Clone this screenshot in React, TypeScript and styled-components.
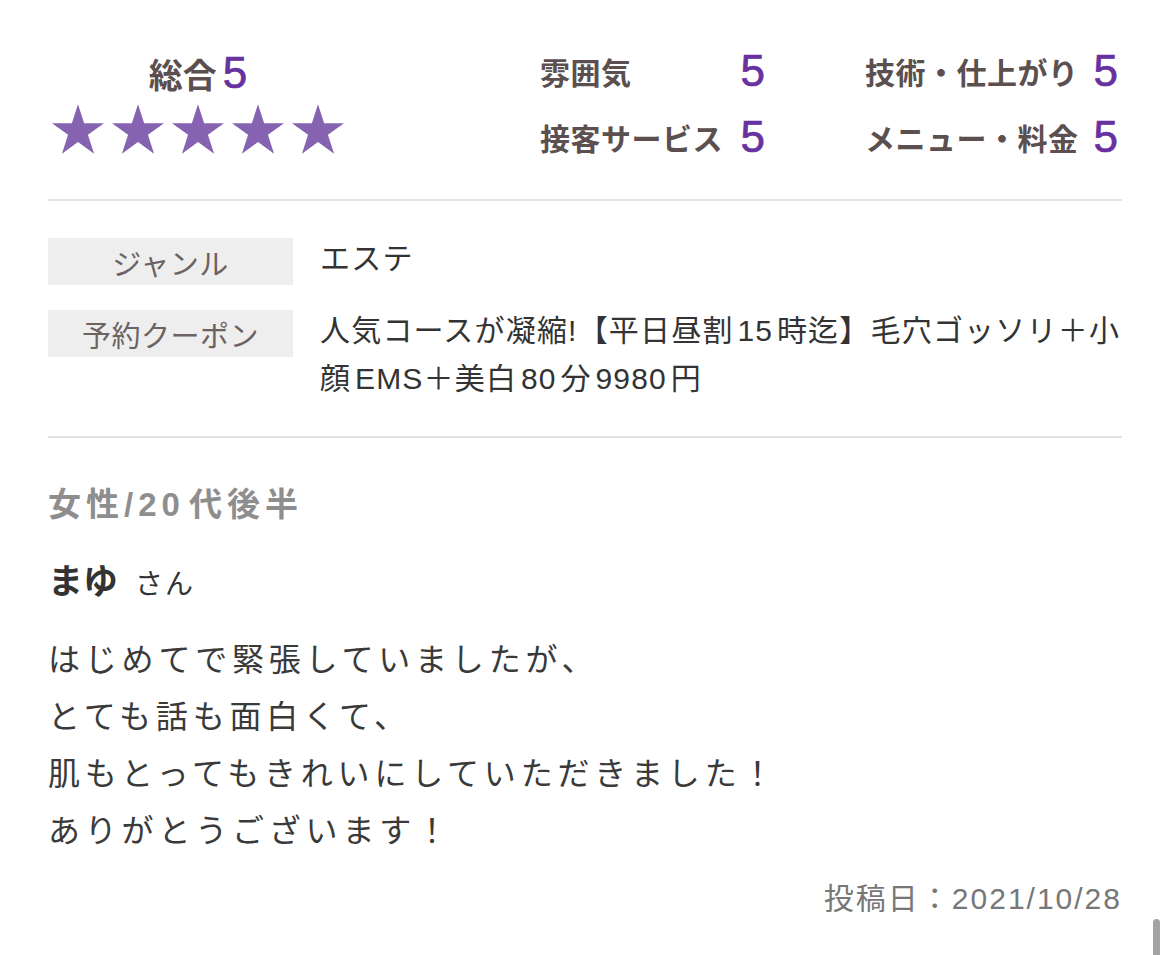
import styled, { createGlobalStyle } from "styled-components";

const GlobalStyle = createGlobalStyle`
  html, body {
    margin: 0;
    padding: 0;
    background: #ffffff;
  }
  body {
    font-family: "Liberation Sans", "Noto Sans CJK JP", sans-serif;
    color: #333333;
    text-autospace: normal;
  }
`;

interface ScoreProps {
  label: string;
  value: number;
}

const scores: ScoreProps[] = [
  { label: "雰囲気", value: 5 },
  { label: "技術・仕上がり", value: 5 },
  { label: "接客サービス", value: 5 },
  { label: "メニュー・料金", value: 5 },
];

const Page = styled.div`
  position: relative;
  min-height: 955px;
  padding: 0 48px;
  box-sizing: border-box;
`;

const RatingSection = styled.section`
  display: flex;
  align-items: flex-start;
  padding: 46px 4px 37px 0;
  border-bottom: 2px solid #e2e2e2;
`;

const Overall = styled.div`
  width: 300px;
  padding-top: 5px;
  display: flex;
  flex-direction: column;
  align-items: center;
`;

const OverallTitle = styled.div`
  display: flex;
  align-items: center;
  height: 44px;
  font-size: 34px;
  font-weight: 700;
  color: #5b4f4f;
  span {
    margin-left: 6px;
    font-size: 44px;
    font-weight: 400;
    color: #67319f;
    -webkit-text-stroke: 0.7px #67319f;
  }
`;

const Stars = styled.div`
  display: flex;
  gap: 8px;
  margin-top: 9px;
`;

const Star = styled.svg`
  width: 52px;
  height: 50px;
  fill: #8563b1;
`;

const ScoreGrid = styled.div`
  margin-left: auto;
  display: grid;
  grid-template-columns: 225px 253px;
  column-gap: 100px;
  row-gap: 16px;
`;

const ScoreItem = styled.div`
  display: flex;
  align-items: center;
  justify-content: space-between;
  height: 50px;
`;

const ScoreLabel = styled.div`
  font-size: 30px;
  font-weight: 700;
  letter-spacing: 0.5px;
  color: #5b4f4f;
`;

const ScoreValue = styled.div`
  font-size: 44px;
  line-height: 50px;
  color: #67319f;
  -webkit-text-stroke: 0.7px #67319f;
`;

const InfoTable = styled.div`
  display: flex;
  flex-direction: column;
  gap: 25px;
  padding: 37px 0 33px;
  border-bottom: 2px solid #e2e2e2;
`;

const InfoRow = styled.div`
  display: flex;
  align-items: flex-start;
`;

const InfoLabel = styled.div`
  flex: 0 0 245px;
  height: 47px;
  display: flex;
  align-items: center;
  justify-content: center;
  background: #eeeeee;
  font-size: 29px;
  letter-spacing: 0.5px;
  color: #6b6262;
`;

const InfoValue = styled.div`
  flex: 1;
  margin: -3px 0 0 27px;
  font-size: 30px;
  line-height: 48px;
  letter-spacing: 1.2px;
  color: #333333;
`;

const Review = styled.div`
  padding-top: 45px;
`;

const Profile = styled.div`
  font-size: 33px;
  line-height: 44px;
  font-weight: 700;
  letter-spacing: 5px;
  color: #8e8e8e;
`;

const Name = styled.div`
  margin-top: 33px;
  line-height: 44px;
  font-size: 35px;
  font-weight: 700;
  color: #333333;
  small {
    margin-left: 17px;
    font-size: 28px;
    font-weight: 400;
    letter-spacing: 2px;
  }
`;

const Comment = styled.p`
  margin: 25px 0 0;
  font-size: 32px;
  line-height: 57px;
  letter-spacing: 4.8px;
  color: #3a3a3a;
`;

const PostedAt = styled.div`
  margin-top: 19px;
  text-align: right;
  font-size: 30px;
  line-height: 40px;
  letter-spacing: 2px;
  color: #777777;
`;

const ScrollThumb = styled.div`
  position: fixed;
  right: 10px;
  bottom: 0;
  width: 7px;
  height: 36px;
  border-radius: 4px 4px 0 0;
  background: #a3a3a3;
`;

function StarIcon() {
  return (
    <Star viewBox="2.45 0 95.1 90.45">
      <polygon points="50,0 61.23,34.55 97.55,34.55 68.16,55.9 79.39,90.45 50,69.1 20.61,90.45 31.84,55.9 2.45,34.55 38.77,34.55" />
    </Star>
  );
}

function App() {
  return (
    <>
      <GlobalStyle />
      <Page>
        <RatingSection>
          <Overall>
            <OverallTitle>
              総合<span>5</span>
            </OverallTitle>
            <Stars>
              {[0, 1, 2, 3, 4].map((i) => (
                <StarIcon key={i} />
              ))}
            </Stars>
          </Overall>
          <ScoreGrid>
            {scores.map((s) => (
              <ScoreItem key={s.label}>
                <ScoreLabel>{s.label}</ScoreLabel>
                <ScoreValue>{s.value}</ScoreValue>
              </ScoreItem>
            ))}
          </ScoreGrid>
        </RatingSection>

        <InfoTable>
          <InfoRow>
            <InfoLabel>ジャンル</InfoLabel>
            <InfoValue>エステ</InfoValue>
          </InfoRow>
          <InfoRow>
            <InfoLabel>予約クーポン</InfoLabel>
            <InfoValue>
              人気コースが凝縮!【平日昼割15時迄】毛穴ゴッソリ＋小顔EMS＋美白80分9980円
            </InfoValue>
          </InfoRow>
        </InfoTable>

        <Review>
          <Profile>女性/20代後半</Profile>
          <Name>
            まゆ<small>さん</small>
          </Name>
          <Comment>
            はじめてで緊張していましたが、
            <br />
            とても話も面白くて、
            <br />
            肌もとってもきれいにしていただきました！
            <br />
            ありがとうございます！
          </Comment>
          <PostedAt>投稿日：2021/10/28</PostedAt>
        </Review>
        <ScrollThumb />
      </Page>
    </>
  );
}

export default App;
